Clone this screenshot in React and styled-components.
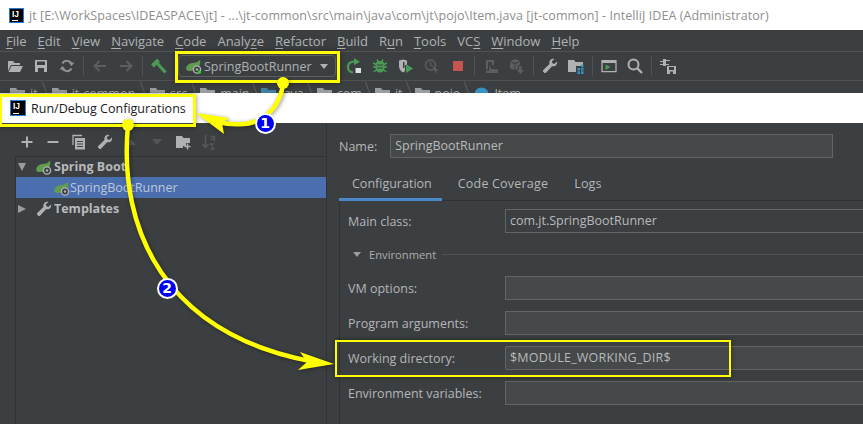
import React from "react";
import styled, { createGlobalStyle } from "styled-components";

const Global = createGlobalStyle`
  html, body { margin: 0; padding: 0; background: #3c3f41; }
  #root { width: 863px; height: 424px; overflow: hidden; }
`;

const FONT = `"Open Sans", "Noto Sans", "Liberation Sans", sans-serif`;

const Page = styled.div`
  position: relative;
  width: 863px;
  height: 424px;
  overflow: hidden;
  display: flex;
  flex-direction: column;
  background: #3c3f41;
  color: #b4b6b8;
  font-family: ${FONT};
  font-size: 12.5px;
`;

const TitleBar = styled.div`
  height: 30px;
  flex: none;
  background: #fff;
  color: #8e8e8e;
  display: flex;
  align-items: center;
  gap: 5px;
  padding: 0 0 0 9px;
  font-size: 12.5px;
  letter-spacing: 0.07px;
  white-space: nowrap;
`;

const Logo = styled.div`
  box-sizing: border-box;
  width: ${(p) => p.$size}px;
  height: ${(p) => p.$size}px;
  flex: none;
  background: #000;
  outline: 1px solid #1d7fd8;
  outline-offset: -1px;
  color: #fff;
  font: bold 8.5px/9px "Liberation Sans", sans-serif;
  letter-spacing: 0;
  padding: 2px 0 0 3px;
  position: relative;
  &::after {
    content: "";
    position: absolute;
    left: 3px;
    bottom: 2px;
    width: 6px;
    height: 1px;
    background: #fff;
  }
`;

const MenuBar = styled.div`
  height: 21px;
  flex: none;
  display: flex;
  align-items: center;
  padding-left: 6px;
  gap: 11px;
  font-size: 13px;
  color: #aeb2b4;
  border-bottom: 1px solid #515151;
`;

const Mnemonic = styled.span`
  text-decoration: underline;
  text-underline-offset: 2px;
`;

const Toolbar = styled.div`
  height: 28px;
  flex: none;
  display: flex;
  align-items: center;
  padding-left: 2px;
  border-bottom: 1px solid #515151;
`;

const ToolCell = styled.div`
  width: 26px;
  height: 26px;
  flex: none;
  display: flex;
  align-items: center;
  justify-content: center;
`;

const ToolSep = styled.div`
  width: 1px;
  height: 20px;
  margin: 0 3px;
  flex: none;
  background: #515151;
`;

const Combo = styled.div`
  box-sizing: border-box;
  width: 158px;
  height: 22px;
  margin: 0 5px 0 6px;
  padding: 0 7px 0 7px;
  flex: none;
  display: flex;
  align-items: center;
  gap: 2px;
  border: 1px solid #5e6060;
  border-radius: 4px;
  font-size: 12.5px;
  color: #aeb1b3;
`;

const ComboCaret = styled.span`
  margin-left: auto;
  width: 0;
  height: 0;
  border-left: 4.5px solid transparent;
  border-right: 4.5px solid transparent;
  border-top: 5px solid #afb1b3;
`;

const NavBar = styled.div`
  height: 12px;
  flex: none;
  overflow: hidden;
  display: flex;
  align-items: flex-start;
  padding-left: 10px;
  font-size: 12.5px;
  color: #a9a9a9;
`;

const Crumb = styled.div`
  position: relative;
  display: flex;
  align-items: flex-start;
  gap: 5px;
  padding-top: 6px;
  line-height: 14px;
  margin-right: ${(p) => p.$gap}px;
  white-space: nowrap;
  &::after {
    content: ${(p) => (p.$gap ? '""' : "none")};
    position: absolute;
    top: 0;
    right: ${(p) => -p.$gap / 2}px;
    width: 1px;
    height: 13px;
    background: #5a5d5f;
    transform: rotate(-20deg);
  }
`;

const DialogTitle = styled.div`
  height: 30px;
  flex: none;
  background: #fff;
  color: #1a1a1a;
  display: flex;
  align-items: center;
  gap: 5px;
  padding-left: 10px;
  font-size: 12.5px;
`;

const DialogBody = styled.div`
  flex: 1;
  display: grid;
  grid-template-columns: 327px 1fr;
  min-height: 0;
`;

const LeftPane = styled.div`
  border-right: 1px solid #323232;
  padding: 6px 0 0 15px;
  box-sizing: border-box;
  display: flex;
  flex-direction: column;
`;

const TreeTools = styled.div`
  height: 26px;
  display: flex;
  align-items: center;
  margin: 0 0 1px -1px;
`;

const TreeTool = styled.div`
  width: 26px;
  height: 26px;
  flex: none;
  display: flex;
  align-items: center;
  justify-content: center;
`;

const Tree = styled.div`
  flex: 1;
  box-sizing: border-box;
  border: 1px solid #323232;
  border-bottom: 0;
  border-right: 0;
`;

const TreeRow = styled.div`
  height: 21px;
  display: flex;
  align-items: center;
  gap: ${(p) => (p.$child ? 0 : 2)}px;
  padding-left: ${(p) => (p.$child ? 38 : 0)}px;
  background: ${(p) => (p.$selected ? "#4b6eaf" : "transparent")};
  color: ${(p) => (p.$selected ? "#bcc8da" : "#b8babc")};
  font-weight: ${(p) => (p.$bold ? 700 : 400)};
  font-size: 12.5px;
  white-space: nowrap;
  &:first-child {
    margin-top: -1px;
  }
`;

const TreeCaret = styled.span`
  width: 12px;
  height: 16px;
  margin-right: 6px;
  flex: none;
  display: flex;
  align-items: center;
  justify-content: center;
  &::before {
    content: "";
    width: 0;
    height: 0;
    ${(p) =>
      p.$open
        ? `border-left: 4.5px solid transparent; border-right: 4.5px solid transparent; border-top: 8px solid #9a9da0;`
        : `border-top: 4.5px solid transparent; border-bottom: 4.5px solid transparent; border-left: 8px solid #9a9da0;`}
  }
`;

const RightPane = styled.div`
  padding: 11px 0 0 12px;
  min-width: 0;
  display: flex;
  flex-direction: column;
`;

const NameRow = styled.div`
  display: flex;
  align-items: center;
  height: 24px;
  width: 494px;
  gap: 13px;
`;

const TabStrip = styled.div`
  display: flex;
  height: 31px;
  margin-top: 12px;
  box-sizing: border-box;
  border-bottom: 1px solid #323232;
`;

const Tab = styled.div`
  box-sizing: border-box;
  height: 31px;
  padding: 5px ${(p) => (p.$active ? 10 : 13)}px 0 13px;
  margin-right: ${(p) => (p.$active ? 3 : 0)}px;
  line-height: 18px;
  font-size: 12.5px;
  letter-spacing: ${(p) => (p.$active ? 0 : 0.2)}px;
  border-bottom: ${(p) => (p.$active ? "3px solid #4a88c7" : "0")};
`;

const TabBody = styled.div`
  flex: 1;
  border-left: 1px solid #323232;
  padding: 8px 0 0 8px;
  display: flex;
  flex-direction: column;
  min-height: 0;
`;

const FieldRow = styled.div`
  display: grid;
  grid-template-columns: 157px 400px;
  align-items: center;
  height: 24px;
  margin-bottom: 11px;
`;

const Field = styled.div`
  box-sizing: border-box;
  height: 24px;
  flex: 1;
  border: 1px solid #646464;
  border-radius: ${(p) => (p.$round ? 2 : 0)}px;
  background: ${(p) => (p.$plain ? "#3c3f41" : "#45494a")};
  padding: 0 4px;
  line-height: 21px;
  color: #b8babc;
  font-size: 12.5px;
  letter-spacing: ${(p) => (p.$round ? 0.2 : 0)}px;
  white-space: nowrap;
`;

const SectionRow = styled.div`
  height: 21px;
  margin: 0 0 11px;
  display: flex;
  align-items: center;
  gap: 6px;
  padding-left: 5px;
  font-size: 11.2px;
  color: #adadad;
`;

const SectionCaret = styled.span`
  width: 0;
  height: 0;
  border-left: 4px solid transparent;
  border-right: 4px solid transparent;
  border-top: 5px solid #9a9da0;
  margin-right: 2px;
`;

const SectionLine = styled.span`
  flex: 1;
  height: 1px;
  background: #515151;
`;

const Highlight = styled.div`
  position: absolute;
  box-sizing: border-box;
  left: ${(p) => p.$x}px;
  top: ${(p) => p.$y}px;
  width: ${(p) => p.$w}px;
  height: ${(p) => p.$h}px;
  border: ${(p) => p.$t}px solid #ffff00;
  box-shadow: 0 0 5px rgba(0, 0, 0, 0.45);
  pointer-events: none;
`;

const Overlay = styled.svg`
  position: absolute;
  left: 0;
  top: 0;
  width: 863px;
  height: 424px;
  pointer-events: none;
  filter: drop-shadow(1px 1px 2px rgba(0, 0, 0, 0.4));
`;

const Badge = styled.div`
  position: absolute;
  box-sizing: border-box;
  left: ${(p) => p.$x - 10.5}px;
  top: ${(p) => p.$y - 10.5}px;
  width: 21px;
  height: 21px;
  border-radius: 50%;
  border: 2px solid #fff;
  background: #0000f0;
  color: #fff;
  font: bold 14px/17px "DejaVu Sans", sans-serif;
  text-align: center;
`;

const G = "#afb1b3";
const D = "#5c5f61";
const GR = "#499c54";

const Svg = ({ children, w = 16, h = 16 }) => (
  <svg width={w} height={h} viewBox={`0 0 ${w} ${h}`} fill="none">{children}</svg>
);

const OpenIcon = () => (
  <Svg><path fill={G} d="M1 3h5l1.500 2H13v2H4L1 13zM4.500 8H16l-3 6H1.500z" /></Svg>
);
const SaveIcon = () => (
  <Svg><path fill={G} fillRule="evenodd" d="M2 2h12v12H2zM4 3.500V7h8V3.500zM5 10v4h6v-4z" /></Svg>
);
const SyncIcon = () => (
  <Svg>
    <path stroke="#8f9193" strokeWidth="2" d="M13 6.500A5.300 5.300 0 0 0 3.400 5.500M3 9.500a5.300 5.300 0 0 0 9.600 1" />
    <path fill="#8f9193" d="M15.500 4.500 12.500 8 10 5zM.5 11.500 3.500 8 6 11z" />
  </Svg>
);
const ArrowIcon = ({ flip }) => (
  <Svg>
    <g transform={flip ? "translate(16 0) scale(-1 1)" : undefined}>
      <path stroke={D} strokeWidth="2" d="M2.500 8H14M7.500 3 2.500 8l5 5" />
    </g>
  </Svg>
);
const HammerIcon = () => (
  <Svg>
    <path stroke={GR} strokeWidth="3.200" d="M6 5l8.500 9.500" />
    <path stroke={GR} strokeWidth="4" d="M1.500 8 7.500 2" />
  </Svg>
);
const SpringIcon = ({ dot }) => (
  <Svg>
    <path fill="#5f9c4f" d="M0 11C.5 6.500 4.500 5 8 4.800c2.500-.2 5-1.300 6-3.300 1 3.500-.2 6.500-2.500 8.500-2 1.800-4.500 3-7 3-2 0-3.500 0-4.500-2z" />
    <circle cx="11" cy="11.500" r="3.600" fill="#3c3f41" stroke="#afb1b3" strokeWidth="1.400" />
    <circle cx="11" cy="11.500" r="1.200" fill="#afb1b3" />
    {dot && <circle cx="13.500" cy="14" r="1.700" fill="#2fd02f" />}
  </Svg>
);
const RerunIcon = () => (
  <Svg>
    <path stroke={GR} strokeWidth="2.200" d="M7 14.500C3 14 1.500 11 2 8c.5-3 3-4.500 7-4.500" />
    <path fill={GR} d="M8 0l6 3.700L8 7.300z" />
    <path fill="#e0e0e0" d="M9.500 10h5.500v5H9.500z" />
  </Svg>
);
const BugIcon = () => (
  <Svg>
    <path stroke={GR} strokeWidth="1.500" d="M1 5l3 1.500M15 5l-3 1.500M1 9h3M15 9h-3M1.500 14l3-2M14.500 14l-3-2M5 1.500l1.500 2.500M11 1.500 9.500 4" />
    <path fill={GR} d="M8 3c2.800 0 4.500 1.500 4.500 3.500v4c0 2-2 4-4.500 4s-4.500-2-4.500-4v-4C3.500 4.500 5.200 3 8 3z" />
    <path stroke="#3c3f41" d="M5 7h6M5 10h6" />
  </Svg>
);
const CoverageIcon = () => (
  <Svg>
    <path fill={G} d="M1 2.500 5 1.500l4 1V7H7v6l-2 1.500C2.500 13 1 11 1 8z" />
    <path fill="#3c3f41" d="M5 4h1.500v6H5z" />
    <path fill={GR} d="M8 6l7 4.500L8 15z" />
  </Svg>
);
const ProfileIcon = () => (
  <Svg>
    <circle cx="6.500" cy="7" r="5" stroke={D} strokeWidth="1.500" />
    <path stroke={D} strokeWidth="1.200" d="M6.500 4v3l2 1" />
    <path fill={D} d="M8 8l7 4.500-3 .5v3z" />
  </Svg>
);
const StopIcon = () => (
  <Svg><path fill="#c75450" d="M3 3h10v10H3z" /></Svg>
);
const AttachIcon = () => (
  <Svg>
    <path fill={D} fillRule="evenodd" d="M3 2h8v5H9V4H5v7H3z" />
    <path fill={D} d="M7 6l1 5h4l1 1 1-1h1v4H3v-3l3 1z" />
  </Svg>
);
const CubeIcon = () => (
  <Svg>
    <path fill={D} d="M6 1l5 2-5 2-5-2zM1 4l4.500 2v6L1 10zM6.500 6 11 4v3H9v4l-2.500 1z" />
    <path fill={D} d="M10 8h2.500v4H15l-3.500 4L8 12h2z" />
  </Svg>
);
const WrenchIcon = () => (
  <Svg>
    <path fill={G} d="M15 3.500c.8 2.500-1.500 5.500-5 4.700L3.800 15H2.600L1 13.400v-1.200L7.500 6C6.800 2.500 9.500 0 12.500 1L9.800 3.300l.6 2 2 .6z" />
  </Svg>
);
const ProjectIcon = () => (
  <Svg>
    <path fill={G} d="M0 2h6l1.500 2H15v4H8v6H0z" />
    <path fill="#3592c4" d="M9.500 10H12v2.500H9.500zM13 10h2.500v2.500H13zM9.500 13.300H12v2.700H9.500zM13 13.300h2.500v2.700H13zM13 6.700h2.500v2.500H13z" />
  </Svg>
);
const TerminalIcon = () => (
  <Svg>
    <path stroke={G} strokeWidth="1.300" d="M1 2.600h14v11H1z" />
    <path fill={G} d="M1 2.600h14V5H1z" />
    <path fill={GR} d="M4.500 6.500 9.500 9l-5 3z" />
  </Svg>
);
const SearchIcon = () => (
  <Svg>
    <circle cx="6.500" cy="6.500" r="5" stroke={G} strokeWidth="2" />
    <path stroke={G} strokeWidth="2.400" d="M10 10l5 5" />
  </Svg>
);
const PowerSaveIcon = () => (
  <Svg>
    <path fill={G} d="M3 1h3v7H3zM0 3h3v1H0zM0 6h3v1H0zM6 2h4v1H6zM6 6h3v1H6z" />
    <path fill={G} fillRule="evenodd" d="M7 8h9v8H7zM9 9v3h5V9zM10 13.500V16h3v-2.500z" />
  </Svg>
);
const PlusIcon = () => (
  <Svg><path stroke={G} strokeWidth="2" d="M8 2.500v11M2.500 8h11" /></Svg>
);
const MinusIcon = () => (
  <Svg><path stroke={G} strokeWidth="2" d="M2.500 8h11" /></Svg>
);
const CopyIcon = () => (
  <Svg>
    <path stroke={G} strokeWidth="1.300" d="M2 11V1.500h9" />
    <path fill={G} fillRule="evenodd" d="M4 4h10v11.500H4zM6 7v1h6V7zM6 9.500v1h6v-1zM6 12v1h6v-1z" />
  </Svg>
);
const UpIcon = () => <Svg><path fill="#54575a" d="M3 11l5-6 5 6z" /></Svg>;
const DownIcon = () => <Svg><path fill="#54575a" d="M3 5l5 6 5-6z" /></Svg>;
const NewFolderIcon = () => (
  <Svg>
    <path fill={G} d="M1 2h6l1.500 2H15v5h-4v3H8v2H1z" />
    <path stroke={G} strokeWidth="1.400" d="M12.500 9.500v6M9.500 12.500h6" />
  </Svg>
);
const SortIcon = () => (
  <svg width="16" height="18" viewBox="0 0 16 18" fill="none">
    <path stroke="#54575a" strokeWidth="1.500" d="M4.500 2v12M1.500 11l3 3.500 3-3.500" />
    <path stroke="#54575a" strokeWidth="1.300" d="M9.500 3.500h4v5M9.500 6h4M13 11H9.500L13 16H9.500" />
  </svg>
);
const CrumbFolder = ({ blue }) => (
  <Svg w={15} h={12}><path fill={blue ? "#3d7f9f" : "#9a9da0"} d="M0 1h6l1.500 2H15v9H0z" /></Svg>
);
const ClassBadge = () => (
  <Svg w={15} h={15}><circle cx="7.500" cy="7.500" r="7" fill="#3592c4" /></Svg>
);

const menus = [
  ["F", "ile"], ["E", "dit"], ["V", "iew"], ["N", "avigate"], ["C", "ode"],
  ["", "Analy", "z", "e"], ["R", "efactor"], ["B", "uild"], ["", "R", "u", "n"],
  ["T", "ools"], ["", "VC", "S", ""], ["W", "indow"], ["H", "elp"],
];

const crumbs = [
  ["jt", 14], ["jt-common", 15], ["src", 13], ["main", 11], ["java", 13],
  ["com", 13], ["jt", 12], ["pojo", 14],
];

const fields = [
  ["VM options:", ""],
  ["Program arguments:", ""],
  ["Working directory:", "$MODULE_WORKING_DIR$"],
  ["Environment variables:", ""],
];

const Cell = ({ children }) => <ToolCell>{children}</ToolCell>;

export default function App() {
  return (
    <Page>
      <Global />
      <TitleBar>
        <Logo $size={15}>IJ</Logo>
        <span>jt [E:\WorkSpaces\IDEASPACE\jt] - ...\jt-common\src\main\java\com\jt\pojo\Item.java [jt-common] - IntelliJ IDEA (Administrator)</span>
      </TitleBar>
      <MenuBar>
        {menus.map((m) =>
          m[0] ? (
            <span key={m.join("")}><Mnemonic>{m[0]}</Mnemonic>{m[1]}</span>
          ) : (
            <span key={m.join("")}>{m[1]}<Mnemonic>{m[2]}</Mnemonic>{m[3]}</span>
          )
        )}
      </MenuBar>
      <Toolbar>
        <Cell><OpenIcon /></Cell>
        <Cell><SaveIcon /></Cell>
        <Cell><SyncIcon /></Cell>
        <ToolSep />
        <Cell><ArrowIcon /></Cell>
        <Cell><ArrowIcon flip /></Cell>
        <ToolSep />
        <Cell><HammerIcon /></Cell>
        <Combo>
          <SpringIcon dot />
          <span>SpringBootRunner</span>
          <ComboCaret />
        </Combo>
        <Cell><RerunIcon /></Cell>
        <Cell><BugIcon /></Cell>
        <Cell><CoverageIcon /></Cell>
        <Cell><ProfileIcon /></Cell>
        <Cell><StopIcon /></Cell>
        <ToolSep />
        <Cell><AttachIcon /></Cell>
        <Cell><CubeIcon /></Cell>
        <ToolSep />
        <Cell><WrenchIcon /></Cell>
        <Cell><ProjectIcon /></Cell>
        <ToolSep />
        <Cell><TerminalIcon /></Cell>
        <Cell><SearchIcon /></Cell>
        <ToolSep />
        <Cell><PowerSaveIcon /></Cell>
      </Toolbar>
      <NavBar>
        {crumbs.map(([name, gap], i) => (
          <Crumb key={i} $gap={gap}>
            <CrumbFolder blue={name === "java"} />
            <span>{name}</span>
          </Crumb>
        ))}
        <Crumb $gap={0}>
          <ClassBadge />
          <span>Item</span>
        </Crumb>
      </NavBar>
      <DialogTitle>
        <Logo $size={16}>IJ</Logo>
        <span>Run/Debug Configurations</span>
      </DialogTitle>
      <DialogBody>
        <LeftPane>
          <TreeTools>
            <TreeTool><PlusIcon /></TreeTool>
            <TreeTool><MinusIcon /></TreeTool>
            <TreeTool><CopyIcon /></TreeTool>
            <TreeTool><WrenchIcon /></TreeTool>
            <TreeTool><UpIcon /></TreeTool>
            <TreeTool><DownIcon /></TreeTool>
            <TreeTool><NewFolderIcon /></TreeTool>
            <TreeTool><SortIcon /></TreeTool>
          </TreeTools>
          <Tree>
            <TreeRow $bold>
              <TreeCaret $open />
              <SpringIcon />
              <span>Spring Boot</span>
            </TreeRow>
            <TreeRow $selected $child>
              <SpringIcon />
              <span>SpringBootRunner</span>
            </TreeRow>
            <TreeRow $bold>
              <TreeCaret />
              <WrenchIcon />
              <span>Templates</span>
            </TreeRow>
          </Tree>
        </LeftPane>
        <RightPane>
          <NameRow>
            <span>Name:</span>
            <Field>SpringBootRunner</Field>
          </NameRow>
          <TabStrip>
            <Tab $active>Configuration</Tab>
            <Tab>Code Coverage</Tab>
            <Tab>Logs</Tab>
          </TabStrip>
          <TabBody>
            <FieldRow>
              <span>Main class:</span>
              <Field $plain>com.jt.SpringBootRunner</Field>
            </FieldRow>
            <SectionRow>
              <SectionCaret />
              <span>Environment</span>
              <SectionLine />
            </SectionRow>
            {fields.map(([label, value]) => (
              <FieldRow key={label}>
                <span>{label}</span>
                <Field $round={!!value}>{value}</Field>
              </FieldRow>
            ))}
          </TabBody>
        </RightPane>
      </DialogBody>

      <Highlight $x={175} $y={51} $w={165} $h={32} $t={3} />
      <Highlight $x={-1} $y={94} $w={197} $h={33} $t={3} />
      <Highlight $x={335} $y={340} $w={396} $h={37} $t={2} />
      <Overlay viewBox="0 0 863 424">
        <g stroke="#ffff00" strokeWidth="4.500" fill="none" strokeLinecap="round">
          <path d="M283 83C281 105 266 122 244 124C234 125 226 124 218 122" />
          <path d="M128 125C118 230 165 335 315 362" />
        </g>
        <g fill="#ffff00">
          <circle cx="283" cy="83" r="6" />
          <circle cx="128" cy="125" r="6" />
          <path d="M196 113 229 118 222 123 224 134z" />
          <path d="M334 364 300 352 307 362 298 370z" />
        </g>
      </Overlay>
      <Badge $x={265} $y={123}>1</Badge>
      <Badge $x={167} $y={288}>2</Badge>
    </Page>
  );
}
